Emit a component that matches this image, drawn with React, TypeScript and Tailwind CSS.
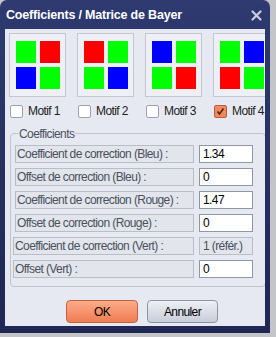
import React from 'react';

const patterns: string[][] = [
  ['#00ff00', '#ff0000', '#0000ff', '#00ff00'],
  ['#ff0000', '#00ff00', '#00ff00', '#0000ff'],
  ['#0000ff', '#00ff00', '#00ff00', '#ff0000'],
  ['#00ff00', '#0000ff', '#ff0000', '#00ff00'],
];

const rows = [
  { label: 'Coefficient de correction (Bleu) :', value: '1.34', edit: true },
  { label: 'Offset de correction (Bleu) :', value: '0', edit: true },
  { label: 'Coefficient de correction (Rouge) :', value: '1.47', edit: true },
  { label: 'Offset de correction (Rouge) :', value: '0', edit: true },
  { label: 'Coefficient de correction (Vert) :', value: '1 (référ.)', edit: false },
  { label: 'Offset (Vert) :', value: '0', edit: true },
];

const font = { fontFamily: '"Liberation Sans Narrow", "Liberation Sans", Arial, sans-serif' };

const App: React.FC = () => {
  return (
    <div className="w-[276px] h-[337px] bg-[#c4c5c9] overflow-hidden">
      <div className="w-[270px] h-[333px] rounded-t-[7px] bg-gradient-to-b from-[#2e3a70] to-[#1f2752] flex flex-col">
        <div className="h-[29px] flex items-center justify-between pl-[6px] pr-[8px] pt-[2px]">
          <span className="text-white font-bold text-[12.5px] tracking-[-0.2px]" style={{ fontFamily: '"Liberation Sans", Arial, sans-serif' }}>
            Coefficients / Matrice de Bayer
          </span>
          <svg width="11" height="11" viewBox="0 0 11 11">
            <path d="M1.5 1.5 L9.5 9.5 M9.5 1.5 L1.5 9.5" stroke="#c8cde0" strokeWidth="2.2" strokeLinecap="round" />
          </svg>
        </div>
        <div className="flex-1 mx-[5px] mb-[7px] bg-[#e6e9f1] overflow-hidden text-[12px] tracking-[-0.6px] text-[#4b505c]" style={font}>
          <div className="w-[280px] pt-[4px] pl-[4px] flex gap-[11px]">
            {patterns.map((p, i) => (
              <div key={i} className="w-[57px] flex flex-col">
                <div className="h-[64px] border border-[#c3c7d0] bg-[#eef0f5] flex items-center justify-center">
                  <div className="grid grid-cols-2 gap-[4px]">
                    {p.map((c, j) => (
                      <div key={j} className="w-[20px] h-[22px]" style={{ backgroundColor: c }} />
                    ))}
                  </div>
                </div>
                <div className="flex items-center gap-[5px] mt-[5px] pl-[1px] text-[#222]">
                  {i === 3 ? (
                    <div className="w-[13px] h-[13px] rounded-[2px] border border-[#b4603f] bg-[#ef8a5e] flex items-center justify-center">
                      <svg width="9" height="9" viewBox="0 0 9 9">
                        <path d="M1.5 4.5 L3.5 7 L7.5 1.5" stroke="#5a2010" strokeWidth="1.6" fill="none" />
                      </svg>
                    </div>
                  ) : (
                    <div className="w-[13px] h-[13px] rounded-[2px] border border-[#9ca2b0] bg-white" />
                  )}
                  <span>Motif {i + 1}</span>
                </div>
              </div>
            ))}
          </div>

          <div className="relative mt-[13px] ml-[5px] w-[256px] h-[154px] border border-[#c0c4cd] rounded-[4px] pt-[11px] pl-[4px]">
            <span className="absolute -top-[9px] left-[7px] px-[1px] bg-[#e6e9f1] text-[#4b505c]">Coefficients</span>
            <div className="flex flex-col gap-[5px]">
              {rows.map((r, i) => (
                <div key={i} className={`flex items-center gap-[5px] ${i >= 4 ? '-ml-[2px]' : ''}`}>
                  <div className={`h-[18px] ${i >= 4 ? 'w-[181px]' : 'w-[179px]'} border border-[#b9bdc6] bg-[#e2e5ec] flex items-center pl-[1px] text-[#4b505c] whitespace-nowrap overflow-hidden`}>
                    {r.label}
                  </div>
                  <div className={`h-[18px] w-[54px] border flex items-center pl-[3px] ${r.edit ? 'border-[#8f96a6] bg-white text-black' : 'border-[#b9bdc6] bg-[#e2e5ec] text-[#4b505c]'}`}>
                    {r.value}
                  </div>
                </div>
              ))}
            </div>
          </div>

          <div className="flex gap-[9px] mt-[13px] ml-[61px]">
            <button className="w-[72px] h-[23px] rounded-[4px] border border-[#c2623f] bg-gradient-to-b from-[#fbab89] to-[#f07c52] text-black">
              OK
            </button>
            <button className="w-[71px] h-[23px] rounded-[4px] border border-[#8e94a6] bg-gradient-to-b from-[#eef0f5] to-[#c9cdd9] text-black">
              Annuler
            </button>
          </div>
        </div>
      </div>
    </div>
  );
};

export default App;
